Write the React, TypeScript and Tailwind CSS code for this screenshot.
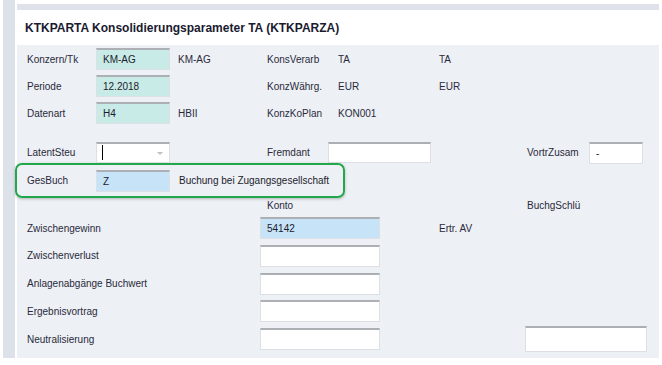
import React from "react";

const font = { fontFamily: '"Liberation Sans", Arial, sans-serif' };

const inputBase =
	"h-[22px] flex items-center pl-[6px] border border-[#dcdfe3] border-t-2 border-t-[#acafb3] text-[10px] text-[#1c1c2c]";

const Field = ({ value, tone, width }: { value?: string; tone: "teal" | "blue" | "white"; width: string }) => {
	const bg = tone === "teal" ? "bg-[#c9ebe7]" : tone === "blue" ? "bg-[#c6e3f7]" : "bg-white";
	return <div className={`${inputBase} ${bg} ${width}`}>{value}</div>;
};

const HeadRow = ({
	label,
	value,
	text,
	label2,
	value2,
	value3,
}: {
	label: string;
	value: string;
	text?: string;
	label2: string;
	value2: string;
	value3?: string;
}) => (
	<div className="flex items-center h-[22px]">
		<div className="w-[69px]">{label}</div>
		<Field value={value} tone="teal" width="w-[74px]" />
		<div className="ml-[8px] w-[89px]">{text}</div>
		<div className="w-[71px]">{label2}</div>
		<div className="w-[101px]">{value2}</div>
		<div>{value3}</div>
	</div>
);

const KontoRow = ({ label, value, extra }: { label: string; value?: string; extra?: string }) => (
	<div className="flex items-center h-[22px]">
		<div className="w-[233px]">{label}</div>
		<div className={`${inputBase} pl-[5px] w-[120px] ${value ? "bg-[#c6e3f7]" : "bg-white"}`}>{value}</div>
		<div className="ml-[59px]">{extra}</div>
	</div>
);

export default function App() {
	return (
		<div className="flex w-[662px] h-[365px] bg-white overflow-hidden text-[10px] text-[#2a2a3c]" style={font}>
			<div className="ml-[3px] w-[12px] h-[358px] bg-[#dde1ea]" />
			<div className="ml-[2px] w-[642px] flex flex-col">
				<div className="mt-[4px] h-[6px] bg-[#dfe2ea]" />
				<div className="h-[35px] bg-white flex items-center pl-[8px] text-[12px] font-bold text-[#1a1a30]">
					KTKPARTA Konsolidierungsparameter TA (KTKPARZA)
				</div>
				<div className="h-[313px] bg-[#edf0f4] pl-[10px] pt-[3px] flex flex-col">
					<div className="flex flex-col gap-[5px]">
						<HeadRow label="Konzern/Tk" value="KM-AG" text="KM-AG" label2="KonsVerarb" value2="TA" value3="TA" />
						<HeadRow label="Periode" value="12.2018" label2="KonzWährg." value2="EUR" value3="EUR" />
						<HeadRow label="Datenart" value="H4" text="HBII" label2="KonzKoPlan" value2="KON001" />
					</div>

					<div className="mt-[18px] flex items-center h-[21px]">
						<div className="w-[69px]">LatentSteu</div>
						<div className="relative h-[21px] w-[74px] bg-white border border-[#dcdfe3] border-t-2 border-t-[#acafb3]">
							<div className="absolute left-[5px] top-[1px] w-px h-[15px] bg-black" />
							<div className="absolute right-[6px] top-[8px] w-0 h-0 border-l-[3px] border-r-[3px] border-t-[3px] border-l-transparent border-r-transparent border-t-[#bcbfc4]" />
						</div>
						<div className="ml-[97px] w-[61px]">Fremdant</div>
						<div className="h-[21px] w-[103px] bg-white border border-[#dcdfe3] border-t-2 border-t-[#acafb3]" />
						<div className="ml-[96px] w-[62px]">VortrZusam</div>
						<div className={`${inputBase} h-[21px] bg-white w-[54px]`}>-</div>
					</div>

					<div className="-ml-[12px] w-[330px] h-[35px] pl-[10px] flex items-center rounded-[7px] border-2 border-[#22a84b] shadow-[0_1px_3px_rgba(0,0,0,0.25)]">
						<div className="w-[69px]">GesBuch</div>
						<Field value="Z" tone="blue" width="w-[74px]" />
						<div className="ml-[9px] text-[#1c1c2c]">Buchung bei Zugangsgesellschaft</div>
					</div>

					<div className="flex items-center h-[14px]">
						<div className="ml-[240px] w-[260px]">Konto</div>
						<div>BuchgSchlü</div>
					</div>

					<div className="mt-[5px] flex flex-col gap-[5.75px]">
						<KontoRow label="Zwischengewinn" value="54142" extra="Ertr. AV" />
						<KontoRow label="Zwischenverlust" />
						<KontoRow label="Anlagenabgänge Buchwert" />
						<KontoRow label="Ergebnisvortrag" />
						<div className="flex items-center h-[22px]">
							<div className="w-[233px]">Neutralisierung</div>
							<div className={`${inputBase} w-[120px] bg-white`} />
							<div className="ml-[145px] h-[26px] w-[122px] bg-white border border-[#dcdfe3] border-t-2 border-t-[#acafb3]" />
						</div>
					</div>
				</div>
			</div>
		</div>
	);
}
